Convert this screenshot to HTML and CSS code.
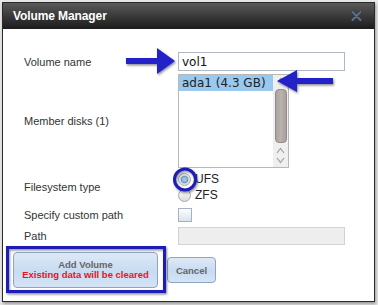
FILE: index.html
```html
<!DOCTYPE html>
<html>
<head>
<meta charset="utf-8">
<link rel="stylesheet" href="styles.css">
</head>
<body>
<div class="dialog">
  <div class="titlebar">
    <span class="title">Volume Manager</span>
    <svg class="close" width="11" height="10" viewBox="0 0 11 10"><path d="M1.5 1 L9.5 9 M9.5 1 L1.5 9" stroke="#2e3640" stroke-width="3.4" stroke-linecap="round"/><path d="M1.5 1 L9.5 9 M9.5 1 L1.5 9" stroke="#5f7287" stroke-width="1.8" stroke-linecap="round"/></svg>
  </div>
  <div class="content">
    <div class="row r-name">
      <span class="label">Volume name</span>
      <div class="textbox">vol1</div>
    </div>
    <div class="row r-disks">
      <span class="label">Member disks (1)</span>
      <div class="listbox">
        <div class="options"><div class="option selected">ada1 (4.3 GB)</div></div>
        <div class="scrollbar">
          <svg class="chev-top" width="8" height="6" viewBox="0 0 8 6"><polyline points="1,5 4,1.5 7,5" fill="none" stroke="#9a9a9a" stroke-width="1.2"/></svg>
          <div class="thumb"></div>
          <div class="spacer"></div>
          <svg class="chev" width="9" height="7" viewBox="0 0 9 7"><polyline points="1,6 4.5,1.5 8,6" fill="none" stroke="#a0a0a0" stroke-width="1.2"/></svg>
          <svg class="chev" width="9" height="7" viewBox="0 0 9 7"><polyline points="1,1 4.5,5.5 8,1" fill="none" stroke="#a0a0a0" stroke-width="1.2"/></svg>
        </div>
      </div>
    </div>
    <div class="row r-fs">
      <span class="label">Filesystem type</span>
      <div class="radios">
        <div class="radio-line"><span class="radio checked"></span><span class="rlabel">UFS</span></div>
        <div class="radio-line"><span class="radio"></span><span class="rlabel">ZFS</span></div>
      </div>
    </div>
    <div class="row r-custom">
      <span class="label">Specify custom path</span>
      <span class="checkbox"></span>
    </div>
    <div class="row r-path">
      <span class="label">Path</span>
      <div class="pathbox"></div>
    </div>
  </div>
  <div class="buttons">
    <div class="btn add"><span class="b1">Add Volume</span><span class="b2">Existing data will be cleared</span></div>
    <div class="btn cancel">Cancel</div>
  </div>
</div>
<svg class="annot" width="378" height="305" viewBox="0 0 378 305">
  <defs>
    <filter id="sh" x="-20%" y="-20%" width="150%" height="150%">
      <feDropShadow dx="1" dy="1.5" stdDeviation="1" flood-color="#000" flood-opacity="0.45"/>
    </filter>
  </defs>
  <g fill="#2222c8" filter="url(#sh)">
    <polygon points="126,58 157,58 157,48 175,61 157,74 157,64 126,64"/>
    <polygon points="333,78 297,78 297,70 277,81 297,92 297,84 333,84"/>
  </g>
  <circle cx="185" cy="179.5" r="10.5" fill="none" stroke="#1d1db6" stroke-width="3" filter="url(#sh)"/>
  <rect x="7.5" y="247.5" width="157" height="44" fill="none" stroke="#1d1db6" stroke-width="3" filter="url(#sh)"/>
</svg>
</body>
</html>
```

FILE: styles.css
```css
* { box-sizing: border-box; }
html, body { margin: 0; padding: 0; }
body {
  width: 378px;
  height: 305px;
  overflow: hidden;
  position: relative;
  background: #e8e8e8;
  font-family: "Liberation Sans", Arial, sans-serif;
}
.dialog {
  margin: 2px 3px 0 2px;
  height: 300px;
  border: 1px solid #2b2b2b;
  background: #fff;
  box-shadow: 1px 2px 3px rgba(0,0,0,0.35);
}
.titlebar {
  height: 26px;
  background: linear-gradient(#5a5a5a, #333 60%, #1c1c1c);
  display: flex;
  align-items: center;
  justify-content: space-between;
  padding: 0 12px 0 10px;
}
.title {
  color: #fff;
  font-weight: bold;
  font-size: 12px;
  letter-spacing: -0.1px;
}
.close { display: block; }
.content {
  padding: 23px 0 0 21px;
}
.row {
  display: grid;
  grid-template-columns: 154px auto;
  align-items: center;
}
.label {
  font-size: 11px;
  color: #333;
}
.textbox {
  width: 167px;
  height: 19px;
  border: 1px solid #b0b8c6;
  padding: 0 3px;
  display: flex;
  align-items: center;
  font-family: "DejaVu Sans", sans-serif;
  font-size: 12px;
  color: #111;
}
.r-disks { margin-top: 3px; }
.listbox {
  width: 111px;
  height: 94px;
  border: 1px solid #b8b8b8;
  display: flex;
}
.options { flex: 1; }
.option {
  height: 16px;
  line-height: 16px;
  padding-left: 3px;
  font-family: "DejaVu Sans", sans-serif;
  font-size: 12px;
  color: #222;
}
.option.selected { background: #99c9ef; }
.scrollbar {
  width: 15px;
  background: #efefef;
  display: flex;
  flex-direction: column;
  align-items: center;
  padding: 2px 0 3px;
}
.chev-top { display: block; }
.thumb {
  margin-top: 6px;
  width: 12px;
  height: 54px;
  border-radius: 4px;
  border: 1px solid #918a86;
  background: linear-gradient(90deg, #aca5a1, #b9b3af 50%, #a7a09c);
}
.spacer { flex: 1; }
.chev { display: block; margin-top: 3px; }
.r-fs { margin-top: 3px; }
.radios { display: flex; flex-direction: column; }
.radio-line {
  height: 16px;
  display: flex;
  align-items: center;
  gap: 4px;
}
.radio {
  width: 13px;
  height: 13px;
  border-radius: 50%;
  border: 1px solid #a9a9a9;
  background: linear-gradient(#fdfdfd, #dcdcdc);
}
.radio.checked {
  background: radial-gradient(circle at 50% 50%, #a9cbe6 0, #8ab6dc 2.6px, #5f8fbb 3.3px, #d9d9d9 4.2px, #ececec 6px);
}
.rlabel {
  font-size: 12px;
  color: #222;
}
.r-custom { margin-top: 3px; height: 18px; }
.checkbox {
  width: 14px;
  height: 14px;
  border: 1px solid #a6b2c2;
  background: linear-gradient(#fdfdfd, #dbe3ed);
}
.r-path { margin-top: 3px; }
.pathbox {
  width: 167px;
  height: 18px;
  border: 1px solid #d2d2d2;
  background: #eeeeee;
}
.buttons {
  display: flex;
  align-items: center;
  gap: 9px;
  margin-top: 7px;
  padding-left: 10px;
}
.btn {
  border: 1px solid #8da5bf;
  border-radius: 4px;
  background: linear-gradient(#dde9f7, #c7dbf1 55%, #d4e4f6);
  font-weight: bold;
  font-size: 9.5px;
  color: #666;
  display: flex;
  flex-direction: column;
  align-items: center;
  justify-content: center;
}
.add {
  width: 145px;
  height: 36px;
  line-height: 10.5px;
}
.b2 { color: #e8141c; }
.cancel {
  width: 49px;
  height: 26px;
}
.annot {
  position: absolute;
  left: 0;
  top: 0;
  pointer-events: none;
}
```
